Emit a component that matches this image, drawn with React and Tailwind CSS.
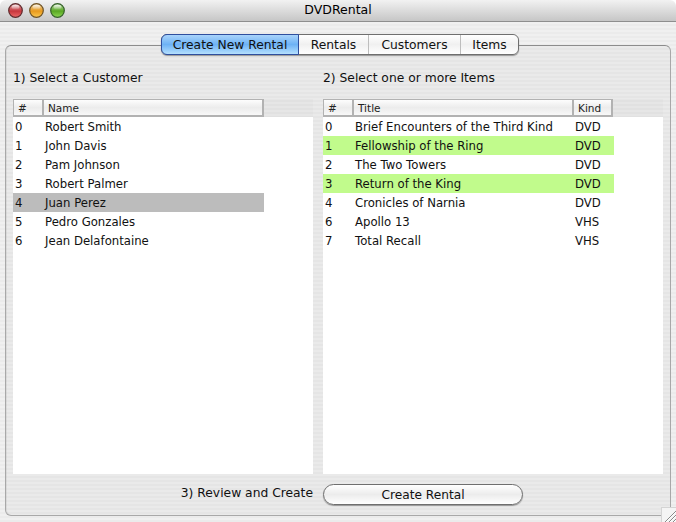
const font = { fontFamily: '"DejaVu Sans", sans-serif' };

const customers = ["Robert Smith", "John Davis", "Pam Johnson", "Robert Palmer", "Juan Perez", "Pedro Gonzales", "Jean Delafontaine"];
const items = [
  ["0", "Brief Encounters of the Third Kind", "DVD", false],
  ["1", "Fellowship of the Ring", "DVD", true],
  ["2", "The Two Towers", "DVD", false],
  ["3", "Return of the King", "DVD", true],
  ["4", "Cronicles of Narnia", "DVD", false],
  ["6", "Apollo 13", "VHS", false],
  ["7", "Total Recall", "VHS", false],
];

function Light({ id, top, mid, bottom, edge }) {
  return (
    <svg width="15" height="15" viewBox="0 0 15 15">
      <defs>
        <linearGradient id={id} x1="0" y1="0" x2="0" y2="1">
          <stop offset="0%" stopColor={top} />
          <stop offset="55%" stopColor={mid} />
          <stop offset="100%" stopColor={bottom} />
        </linearGradient>
        <linearGradient id={id + "s"} x1="0" y1="0" x2="0" y2="1">
          <stop offset="0%" stopColor="#fff" stopOpacity="0.8" />
          <stop offset="100%" stopColor="#fff" stopOpacity="0.05" />
        </linearGradient>
      </defs>
      <circle cx="7.5" cy="7.5" r="6.8" fill={`url(#${id})`} stroke={edge} strokeWidth="1.2" />
      <ellipse cx="7.5" cy="4.2" rx="3.8" ry="2.4" fill={`url(#${id}s)`} />
    </svg>
  );
}

function Th({ className, children }) {
  return (
    <div className={"h-[18px] shrink-0 border-t border-b-2 border-r-2 border-[#b2b2b2] bg-gradient-to-b from-[#fdfdfd] via-[#ececec] to-[#f8f8f8] text-[10.5px] leading-[17px] text-[#222] " + className}>
      {children}
    </div>
  );
}

export default function App() {
  return (
    <div style={font} className="relative w-[676px] h-[522px] flex flex-col overflow-hidden bg-white text-[11.7px] text-[#111]">
      <div className="h-[22px] shrink-0 rounded-t-[6px] border-b border-[#8e8e8e] bg-gradient-to-b from-[#f2f2f2] to-[#c6c6c6] flex items-center relative">
        <div className="flex gap-[6px] pl-[8px]">
          <Light id="lr" top="#d9a0a2" mid="#c8383e" bottom="#ee6a68" edge="#5e2a2c" />
          <Light id="ly" top="#e8cf9c" mid="#e89a1e" bottom="#fbc850" edge="#6e5224" />
          <Light id="lg" top="#b4d8a0" mid="#5aa824" bottom="#8ed854" edge="#35602a" />
        </div>
        <div className="absolute inset-x-0 top-0 text-center text-[12.5px] leading-[20px] text-black">DVDRental</div>
      </div>

      <div className="flex-1 flex flex-col px-[5px] pb-[6px] pt-[12px] bg-[repeating-linear-gradient(180deg,#f0f0f0_0px,#f0f0f0_2px,#ebebeb_2px,#ebebeb_4px)]">
        <div className="relative z-10 flex justify-center h-[22px] shrink-0 pl-[4px]">
          <div className="flex h-[21px] rounded-[6px] border border-[#6f6f6f] shadow-[0_1px_1px_rgba(0,0,0,0.35)] text-[12.3px] leading-[20px] text-[#111]">
            <div className="-my-px -ml-px h-[21px] w-[138px] text-center rounded-l-[6px] border border-[#2f4f9e] bg-gradient-to-b from-[#a9d4fb] via-[#6db2f5] to-[#b5e0fe]">Create New Rental</div>
            <div className="w-[70px] text-center border-r border-[#bdbdbd] bg-gradient-to-b from-white via-[#f0f0f0] to-white">Rentals</div>
            <div className="w-[92px] text-center border-r border-[#bdbdbd] bg-gradient-to-b from-white via-[#f0f0f0] to-white">Customers</div>
            <div className="w-[57px] text-center rounded-r-[6px] bg-gradient-to-b from-white via-[#f0f0f0] to-white">Items</div>
          </div>
        </div>

        <div className="-mt-[11px] flex-1 flex flex-col rounded-[6px] border border-[#a8a8a8] border-t-[#8c8c8c] px-[7px] bg-[#000000]/[0.025] shadow-[inset_1px_0_0_rgba(0,0,0,0.06)]">
          <div className="flex gap-[10px] pt-[23px]">
            <div className="w-[300px] leading-[18px] text-[12.3px]">1) Select a Customer</div>
            <div className="w-[340px] leading-[18px] text-[12.3px]">2) Select one or more Items</div>
          </div>

          <div className="flex gap-[10px] mt-[12px] h-[375px]">
            <div className="w-[300px] flex flex-col">
              <div className="flex bg-[#000000]/[0.015]">
                <Th className="w-[31px] border-l pl-[4px]">#</Th>
                <Th className="w-[220px] pl-[4px]">Name</Th>
              </div>
              <div className="flex-1 bg-white pr-[49px]">
                {customers.map((n, i) => (
                  <div key={i} className={"flex h-[19px] leading-[21px] " + (i === 4 ? "bg-[#bcbcbc]" : "")}>
                    <span className="w-[32px] pl-[2px]">{i}</span>
                    <span>{n}</span>
                  </div>
                ))}
              </div>
            </div>

            <div className="w-[340px] flex flex-col">
              <div className="flex bg-[#000000]/[0.015]">
                <Th className="w-[31px] border-l pl-[4px]">#</Th>
                <Th className="w-[220px] pl-[4px]">Title</Th>
                <Th className="w-[39px] pl-[4px]">Kind</Th>
              </div>
              <div className="flex-1 bg-white pr-[49px]">
                {items.map(([n, t, k, on]) => (
                  <div key={n} className={"flex h-[19px] leading-[21px] " + (on ? "bg-[#c1fb8c]" : "")}>
                    <span className="w-[32px] pl-[2px]">{n}</span>
                    <span className="w-[220px]">{t}</span>
                    <span>{k}</span>
                  </div>
                ))}
              </div>
            </div>
          </div>

          <div className="flex items-center mt-[9px] h-[22px]">
            <div className="w-[300px] text-right text-[12.3px] leading-[18px] -mt-[2px]">3) Review and Create</div>
            <div className="ml-[10px] w-[200px] h-[21px] rounded-full border border-[#6f6f6f] bg-gradient-to-b from-white via-[#ececec] to-white shadow-[0_1px_1px_rgba(0,0,0,0.35)] text-center text-[12.2px] leading-[20px]">Create Rental</div>
          </div>
        </div>
      </div>

      <div className="absolute right-0 bottom-0 w-[15px] h-[15px] bg-[#f4f4f4] border-l border-t border-[#d4d4d4]">
        <svg width="14" height="14" viewBox="0 0 14 14" className="block">
          <path d="M3 14 L14 3 M7 14 L14 7 M11 14 L14 11" stroke="#8a8a8a" strokeWidth="1" fill="none" />
          <path d="M4 14 L14 4 M8 14 L14 8 M12 14 L14 12" stroke="#ffffff" strokeWidth="1" fill="none" />
        </svg>
      </div>
    </div>
  );
}
